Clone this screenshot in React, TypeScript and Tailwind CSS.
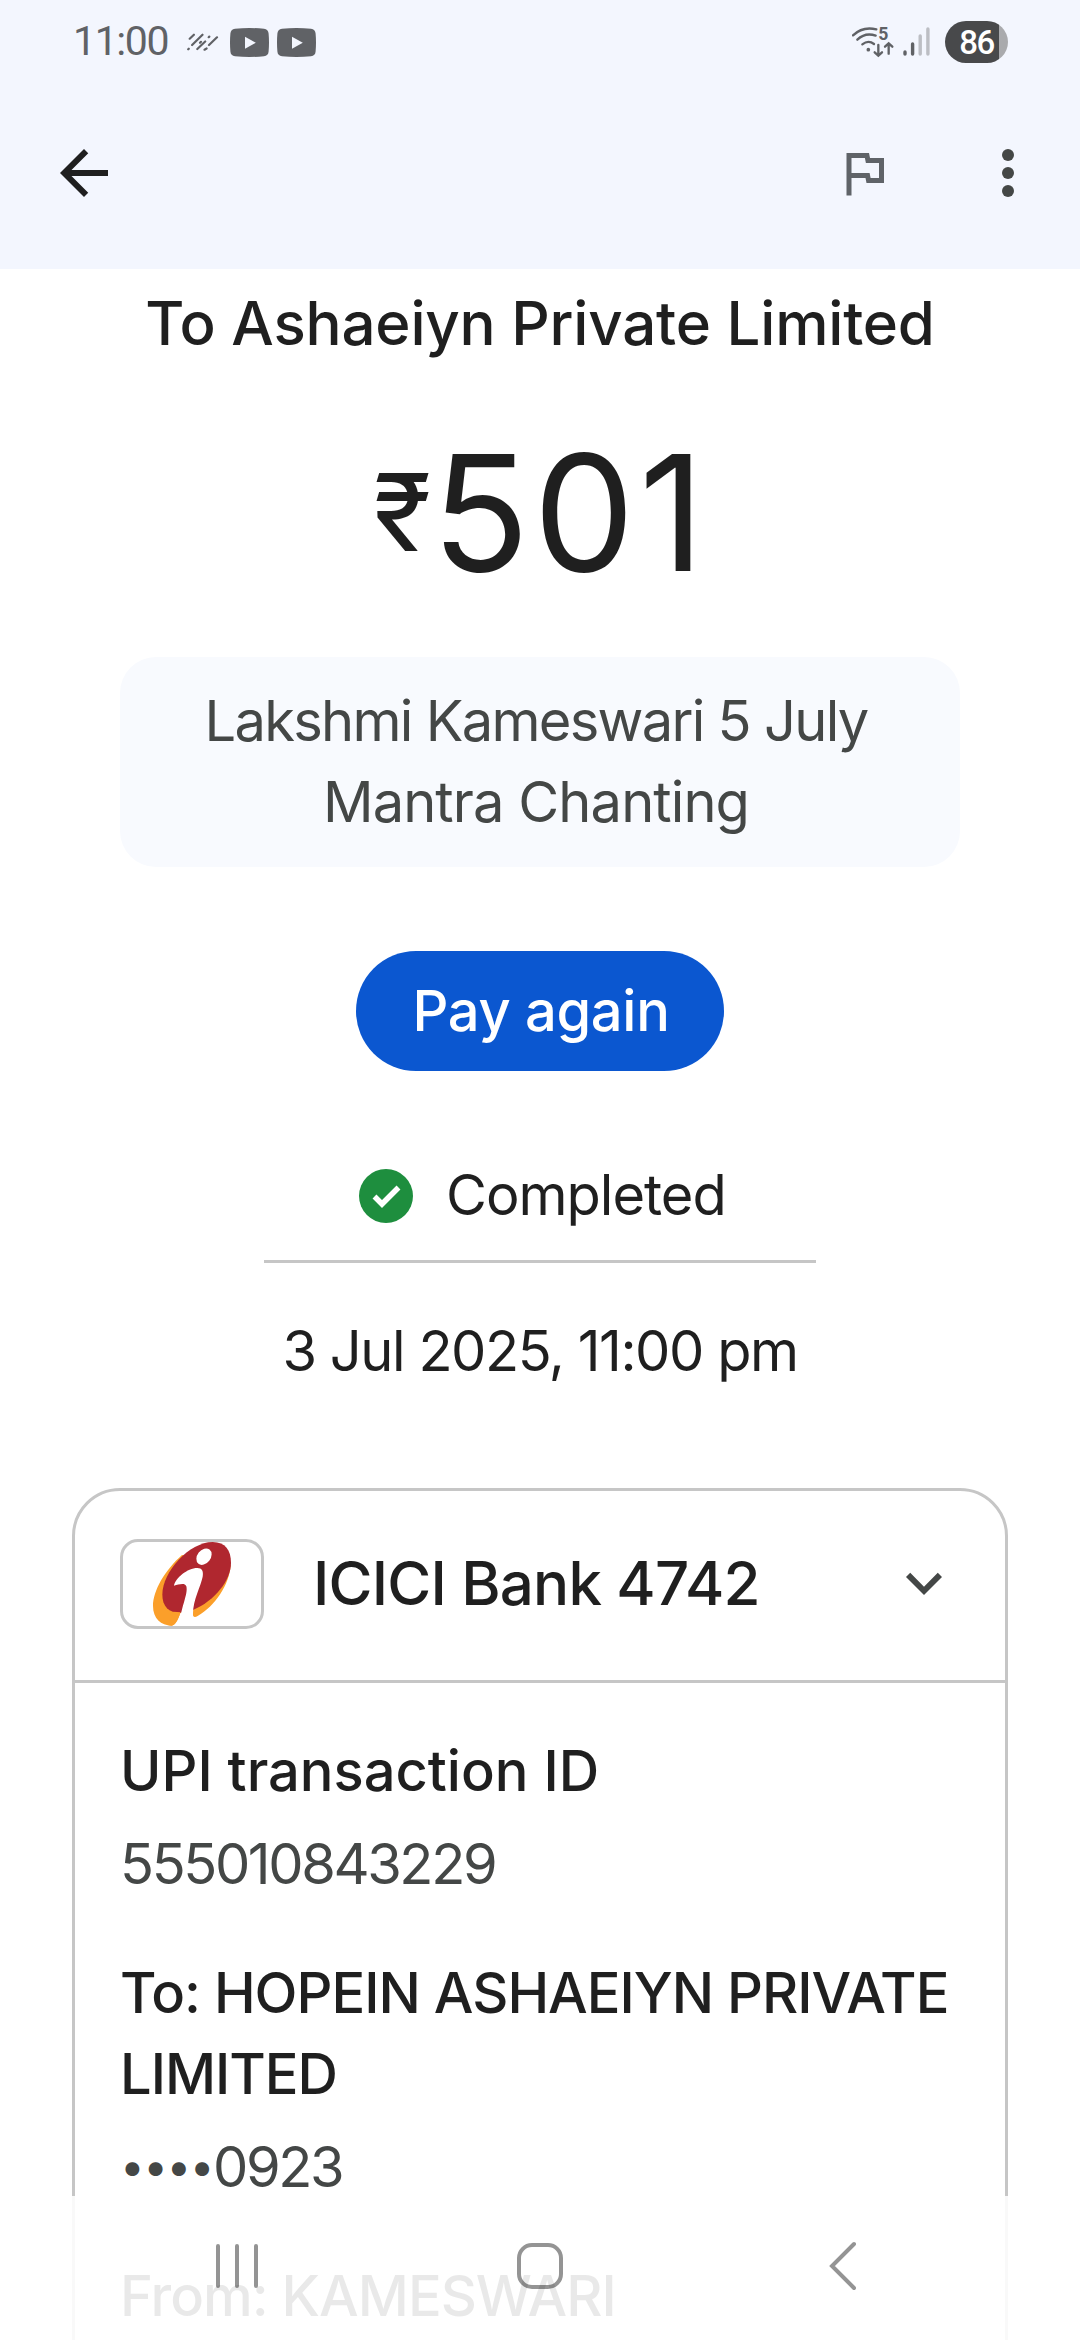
import { ReactNode } from "react";

const details = [
  { title: "UPI transaction ID", value: "555010843229" },
  { title: "To: HOPEIN ASHAEIYN PRIVATE LIMITED", value: "0923", masked: true, caps: true },
  { title: "From: KAMESWARI", caps: true },
];

function YoutubeIcon() {
  return (
    <svg width="39" height="29" viewBox="0 0 39 29">
      <path
        d="M5 .7Q19.500-.7 34 .7Q38.300 1.200 38.600 5.500Q39.400 14.500 38.600 23.500Q38.300 27.800 34 28.300Q19.500 29.700 5 28.300Q.7 27.800.4 23.500Q-.4 14.500.4 5.500Q.7 1.200 5 .7Z"
        fill="#606266"
      />
      <path d="M15 8.700V20.700L25.800 14.700Z" fill="#f3f6fe" />
    </svg>
  );
}

function SlashesIcon() {
  return (
    <svg width="32" height="20" viewBox="187 33 32 20" stroke="#606266" strokeWidth="2.200" strokeLinecap="round">
      <path d="M189.700 39.700L193.900 35.700M192.100 46L202.500 35.700M188.200 50.300L188.800 49.700M197.300 50L205.200 42.500M200 43.800L201 42.800M208.700 38.200L209.300 37.600M209 46L217 38.300M204.500 50.700L206.600 49.500" />
    </svg>
  );
}

function WifiIcon() {
  return (
    <svg width="42" height="34" viewBox="36 36 126 96" fill="none" stroke="#606266" strokeWidth="7" strokeLinecap="round">
      <path d="M39 64Q68 36 109 46" />
      <path d="M52 77Q76 54 107 65" />
      <path d="M67 91Q85 77 102 90" />
      <circle cx="85" cy="107" r="5.500" fill="#606266" stroke="none" />
      <path d="M115 93V124M104 115L115 125L126 115" />
      <path d="M146 119V89M135 98L146 88L157 98" />
      <text x="115" y="79" fill="#606266" stroke="none" fontSize="53" fontWeight="700" fontFamily="Roboto, sans-serif">
        5
      </text>
    </svg>
  );
}

function SignalIcon() {
  return (
    <svg width="27" height="30" viewBox="0 0 27 30" strokeWidth="3.400" strokeLinecap="round">
      <path d="M2 25V27M9.600 17V27" stroke="#606266" />
      <path d="M17.200 9V27M24.900 2V27" stroke="#bcbec4" />
    </svg>
  );
}

function BankLogo() {
  return (
    <svg width="138" height="84" viewBox="189 216 414 252">
      <path
        d="M366 255C315 300 279 362 279 408C279 445 303 467 335 467C345 465 352 455 362 425L399 436C400 442 406 442 413 438C465 408 508 345 512 285Z"
        fill="#fb9f2a"
      />
      <path
        d="M458 216C496 216 513 241 513 279C513 330 465 392 399 420L362 429C326 428 307 409 307 374C307 305 388 216 458 216Z"
        fill="#b0272f"
      />
      <ellipse cx="432" cy="260" rx="20" ry="27" transform="rotate(38 432 260)" fill="#fff" />
      <path
        d="M342 347C346 325 382 294 412 294C426 294 431 304 428 320C423 347 399 390 399 430V468H340C362 455 364 420 372 397C378 376 382 361 379 349C374 337 356 344 342 347Z"
        fill="#fff"
      />
      <path d="M335 467C346 465 354 450 362 427L340 425L325 466Z" fill="#fb9f2a" />
    </svg>
  );
}

function IconButton({ label, children }: { label: string; children: ReactNode }) {
  return (
    <button aria-label={label} className="flex size-[72px] items-center justify-center">
      {children}
    </button>
  );
}

function Header() {
  return (
    <header className="h-[269px] bg-[#f3f6fe]">
      <div className="flex h-[84px] items-center justify-between pl-[73px] pr-[72px]">
        <div className="flex items-center">
          <span className="mt-[-2px] w-[114px] font-['Roboto',sans-serif] text-[41px] leading-none tracking-[-1.4px] text-[#606266]">
            11:00
          </span>
          <SlashesIcon />
          <div className="ml-[11px] flex gap-2">
            <YoutubeIcon />
            <YoutubeIcon />
          </div>
        </div>
        <div className="flex items-center">
          <WifiIcon />
          <div className="ml-[9px] mr-[15px]">
            <SignalIcon />
          </div>
          <div className="flex h-[42px] w-[63px] items-center justify-center rounded-full bg-linear-to-r from-[#48494b] from-85% to-[#a9aaad] to-85% font-['Roboto',sans-serif] text-[33px] font-medium leading-none tracking-[-1.500px] text-white">
            86
          </div>
        </div>
      </div>

      <div className="flex items-center justify-between px-[36px] pt-[53px]">
        <div className="pl-[12px]">
          <IconButton label="Back">
            <svg width="72" height="72" viewBox="0 0 24 24" fill="#1f1f1f">
              <path d="M20 11H7.830l5.590-5.590L12 4l-8 8 8 8 1.410-1.410L7.830 13H20v-2z" />
            </svg>
          </IconButton>
        </div>
        <div className="flex items-center gap-[72px]">
          <IconButton label="Report">
            <svg width="60" height="60" viewBox="0 0 24 24" fill="#5f6368">
              <path d="m12.360 6 .4 2H18v6h-3.360l-.4-2H7V6h5.360M14 4H5v17h2v-7h5.600l.4 2h7V6h-5.600L14 4z" />
            </svg>
          </IconButton>
          <IconButton label="More options">
            <svg width="72" height="72" viewBox="0 0 24 24" fill="#444746">
              <circle cx="12" cy="6" r="2" />
              <circle cx="12" cy="12" r="2" />
              <circle cx="12" cy="18" r="2" />
            </svg>
          </IconButton>
        </div>
      </div>
    </header>
  );
}

function NavigationBar() {
  return (
    <nav className="absolute inset-x-0 bottom-0 flex h-[144px] items-center justify-between bg-white/90 pb-[5px] pl-[213px] pr-[221px]">
      <svg width="48" height="50" viewBox="0 0 48 50" stroke="#000" strokeOpacity=".42" strokeWidth="4" strokeLinecap="round">
        <path d="M5 5V45M24 5V45M43 5V45" />
      </svg>
      <svg className="mr-[9px]" width="48" height="50" viewBox="0 0 48 50" fill="none" stroke="#000" strokeOpacity=".42" strokeWidth="4">
        <rect x="3" y="4" width="42" height="42" rx="13" />
      </svg>
      <svg width="32" height="50" viewBox="0 0 32 50" fill="none" stroke="#000" strokeOpacity=".42" strokeWidth="4" strokeLinecap="round">
        <path d="M27 3L5 25L27 47" />
      </svg>
    </nav>
  );
}

export default function App() {
  return (
    <div className="relative h-[2340px] w-[1080px] overflow-hidden bg-white font-['Inter',sans-serif] text-[56px] leading-[81px] text-[#1f1f1f]">
      <Header />

      <main className="flex flex-col items-center">
        <h1 className="mt-[14px] text-[60px] font-medium leading-[80px] tracking-[-0.200px]">
          To Ashaeiyn Private Limited
        </h1>

        <div className="mt-[69px] flex h-[160px] items-center pl-[2px]">
          <span className="text-[107px] leading-none">₹</span>
          <span className="text-[161px] leading-none tracking-[4px]">501</span>
        </div>

        <p className="mt-[65px] flex h-[210px] w-[840px] flex-col rounded-[36px] bg-[#f8fafe] pr-[8px] pt-[24px] text-center text-[#444746]">
          <span className="tracking-[-1.700px]">Lakshmi Kameswari 5 July</span>
          <span className="tracking-[-0.900px]">Mantra Chanting</span>
        </p>

        <button className="mt-[84px] h-[120px] w-[368px] rounded-full bg-[#0b57d0] pl-[2px] font-medium tracking-[-0.300px] text-white">
          Pay again
        </button>

        <div className="mt-[84px] flex w-[552px] items-center gap-[33px] border-b-[3px] border-[#c6c6c6] pb-[24px] pl-[95px]">
          <svg width="54" height="54" viewBox="0 0 54 54" fill="none">
            <circle cx="27" cy="27" r="27" fill="#1e8e3e" />
            <path d="M15.500 27.500L23 35L39.500 18.500" stroke="#fff" strokeWidth="5.500" />
          </svg>
          <span className="tracking-[-1px]">Completed</span>
        </div>

        <p className="mt-[48px] tracking-[-1.450px]">3 Jul 2025, 11:00 pm</p>

        <section className="mt-[96px] h-[900px] w-[936px] rounded-t-[48px] border-[3px] border-[#c6c6c6]">
          <div className="flex h-[192px] items-center border-b-[3px] border-[#c6c6c6] px-[45px] pb-[3px]">
            <div className="h-[90px] w-[144px] overflow-hidden rounded-[18px] border-[3px] border-[#c6c6c6]">
              <BankLogo />
            </div>
            <span className="ml-[49px] flex-1 pb-[2px] text-[60px] font-medium tracking-[-0.800px]">ICICI Bank 4742</span>
            <svg width="72" height="72" viewBox="0 0 24 24" fill="#444746">
              <path d="M7.410 8.290L12 12.880l4.590-4.590L18 9.700l-6 6-6-6 1.410-1.410z" />
            </svg>
          </div>

          <dl className="flex flex-col gap-[48px] px-[45px] pt-[48px]">
            {details.map((item) => (
              <div key={item.title}>
                <dt className={item.caps ? "font-medium tracking-[-1px]" : "font-medium"}>{item.title}</dt>
                {item.value && (
                  <dd className="mt-[12px] tracking-[-2.400px] text-[#444746]">
                    {item.masked && (
                      <span className="align-[5px] text-[44px] leading-none tracking-[-1.500px]">••••</span>
                    )}
                    {item.value}
                  </dd>
                )}
              </div>
            ))}
          </dl>
        </section>
      </main>

      <NavigationBar />
    </div>
  );
}
